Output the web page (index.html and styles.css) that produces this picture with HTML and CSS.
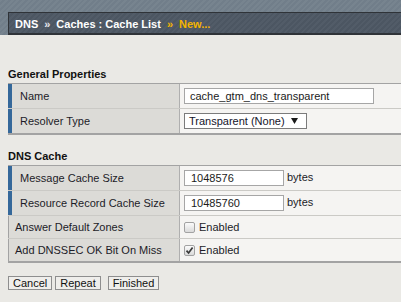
FILE: index.html
```html
<!DOCTYPE html>
<html>
<head>
<meta charset="utf-8">
<link rel="stylesheet" href="styles.css">
</head>
<body>
<div class="banner">
  <div class="bar">
    <span>DNS</span>
    <span class="sep">»</span>
    <span>Caches : Cache List</span>
    <span class="sep cur">»</span>
    <span class="cur">New...</span>
  </div>
</div>

<div class="title first">General Properties</div>
<div class="table">
  <div class="row req">
    <div class="label">Name</div>
    <div class="value"><div class="field wide">cache_gtm_dns_transparent</div></div>
  </div>
  <div class="row req">
    <div class="label">Resolver Type</div>
    <div class="value">
      <div class="select"><span>Transparent (None)</span><svg class="arrow" width="7" height="6" viewBox="0 0 7 6"><polygon points="0,0 7,0 3.5,6" fill="#1a1a1a"/></svg></div>
    </div>
  </div>
</div>

<div class="title second">DNS Cache</div>
<div class="table">
  <div class="row req">
    <div class="label">Message Cache Size</div>
    <div class="value"><div class="field num">1048576</div><span class="unit">bytes</span></div>
  </div>
  <div class="row req">
    <div class="label">Resource Record Cache Size</div>
    <div class="value"><div class="field num">10485760</div><span class="unit">bytes</span></div>
  </div>
  <div class="row">
    <div class="label">Answer Default Zones</div>
    <div class="value"><span class="cb"></span><span>Enabled</span></div>
  </div>
  <div class="row">
    <div class="label">Add DNSSEC OK Bit On Miss</div>
    <div class="value"><span class="cb"><svg width="9" height="9" viewBox="0 0 9 9"><path d="M1.5 4.6 L3.6 7 L7.6 1.6" fill="none" stroke="#3a3a3a" stroke-width="1.7"/></svg></span><span>Enabled</span></div>
  </div>
</div>

<div class="buttons">
  <button class="btn b1">Cancel</button>
  <button class="btn b2">Repeat</button>
  <button class="btn">Finished</button>
</div>
</body>
</html>
```
FILE: styles.css
```css
body {
  margin: 0;
  background: #eae9e5;
  font-family: "Liberation Sans", Arial, sans-serif;
  font-size: 11px;
  color: #1c1c28;
}

.banner {
  height: 35px;
  box-sizing: border-box;
  padding-top: 12px;
  background: repeating-linear-gradient(135deg, #77848f 0 2px, #717e8a 2px 4px);
}

.bar {
  margin-left: 8px;
  height: 23px;
  box-sizing: border-box;
  border-top: 1px solid #2f3338;
  border-left: 1px solid #2f3338;
  border-bottom: 2px solid #2f3338;
  background: repeating-linear-gradient(135deg, #525c68 0 2px, #4c5662 2px 4px);
  display: flex;
  align-items: center;
  gap: 6px;
  padding: 1px 0 0 6px;
  font-weight: bold;
  color: #ffffff;
  line-height: 14px;
}

.bar .sep {
  color: #e6e6ec;
}

.bar .cur {
  color: #f4b400;
}

.title {
  font-weight: bold;
  line-height: 14px;
  margin-left: 8px;
  margin-bottom: 2px;
  color: #111;
}

.title.first {
  margin-top: 32px;
}

.title.second {
  margin-top: 14px;
}

.table {
  margin-left: 8px;
  border-top: 1px solid #a3a3a3;
  border-bottom: 2px solid #a3a3a3;
}

.row {
  display: grid;
  grid-template-columns: 172px 1fr;
}

.row + .row {
  border-top: 1px solid #cbcac6;
}

.label {
  background: #dcdbd7;
  border-left: 1px solid #a3a3a3;
  border-right: 1px solid #afafaf;
  padding: 4px 6px;
  line-height: 14px;
  display: flex;
  align-items: center;
}

.row.req .label {
  border-left: 4px solid #35689a;
  padding-left: 8px;
}

.value {
  background: #f5f4f2;
  padding: 4px;
  line-height: 14px;
  display: flex;
  align-items: center;
  gap: 3px;
}

.field {
  height: 16px;
  box-sizing: border-box;
  border: 1px solid #a6a6a6;
  background: #fff;
  line-height: 14px;
  color: #1a1a1a;
}

.field.wide {
  width: 190px;
  padding-left: 5px;
}

.field.num {
  width: 100px;
  padding-left: 6px;
}

.unit {
  align-self: flex-start;
}

.select {
  width: 123px;
  height: 16px;
  box-sizing: border-box;
  border: 1px solid #7b7b7b;
  background: #fff;
  display: flex;
  align-items: center;
  justify-content: space-between;
  padding: 0 8px 0 4px;
  color: #14142a;
}

.arrow {
  display: block;
}

.cb {
  width: 11px;
  height: 11px;
  box-sizing: border-box;
  border: 1px solid #a2a2a2;
  border-radius: 2px;
  background: linear-gradient(#fbfbfb, #dadada);
  display: flex;
  align-items: center;
  justify-content: center;
  margin-right: 1px;
}

.cb svg {
  display: block;
}

.buttons {
  display: flex;
  margin: 13px 0 0 8px;
}

.btn {
  font-family: inherit;
  font-size: 11px;
  height: 14px;
  line-height: 12px;
  padding: 0 4px 1px;
  border: 1px solid #8e8e8e;
  border-radius: 0;
  background: #efeeeb;
  color: #111;
}

.btn.b1 {
  margin-right: 3px;
}

.btn.b2 {
  margin-right: 7px;
}
```
